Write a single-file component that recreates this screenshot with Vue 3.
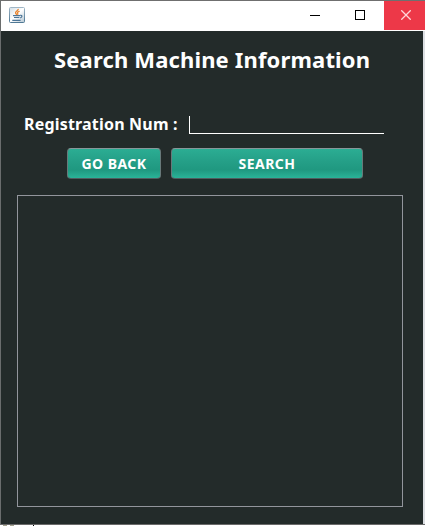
<script setup>
const title = 'Search Machine Information'
</script>

<template>
  <div class="screen">
    <div class="window">
      <header class="titlebar">
        <svg class="app-icon" width="16" height="16" viewBox="0 0 16 16">
          <defs>
            <linearGradient id="tile" x1="0" y1="0" x2="0" y2="1">
              <stop offset="0" stop-color="#9fb6c6" />
              <stop offset="1" stop-color="#4f7894" />
            </linearGradient>
            <linearGradient id="face" x1="0" y1="0" x2="1" y2="1">
              <stop offset="0" stop-color="#d3dee5" />
              <stop offset=".5" stop-color="#ffffff" />
              <stop offset="1" stop-color="#b3c5d1" />
            </linearGradient>
          </defs>
          <rect x=".5" y=".5" width="15" height="15" rx="1" fill="url(#face)" stroke="url(#tile)" />
          <path d="M9.2 1.8C9.6 3.8 5.8 4.2 6.6 6 6.9 6.8 7.7 7 7.5 8M10.6 4.3C8.6 4.8 8.1 5.5 8.7 6.3 9.1 6.9 8.8 7.4 8.4 7.8" fill="none" stroke="#e8822c" stroke-width="1.3" />
          <path d="M4 8.6H11M5 10.5H10.4M3.3 13.4H11.6M11.2 8.4C13.6 7.8 13.4 10.2 11.2 10.8" fill="none" stroke="#4b7597" stroke-width="1.2" />
        </svg>
        <div class="controls">
          <span class="control">
            <svg width="10" height="10" viewBox="0 0 10 10"><path d="M0 5.5H10" stroke="#000" /></svg>
          </span>
          <span class="control">
            <svg width="10" height="10" viewBox="0 0 10 10"><rect x=".5" y=".5" width="9" height="9" fill="none" stroke="#000" /></svg>
          </span>
          <span class="control close">
            <svg width="10" height="10" viewBox="0 0 10 10"><path d="M.3 .3L9.7 9.7M9.7 .3L.3 9.7" stroke="#ffd5d9" stroke-width="1.3" /></svg>
          </span>
        </div>
      </header>
      <main class="content">
        <h1>{{ title }}</h1>
        <div class="field">
          <label for="registration">Registration Num :</label>
          <input id="registration" type="text" />
        </div>
        <div class="actions">
          <button class="back"><span>GO BACK</span></button>
          <button class="search"><span>SEARCH</span></button>
        </div>
        <section class="results"></section>
      </main>
    </div>
    <div class="below"><i class="smudge"></i><i class="smudge"></i><i class="tick"></i></div>
  </div>
</template>

<style>
body {
  margin: 0;
  overflow: hidden;
}
</style>

<style scoped>
.screen {
  width: 425px;
  height: 526px;
  box-sizing: border-box;
  overflow: hidden;
  background: #dcdfe3;
  font-family: "Noto Sans", "DejaVu Sans", sans-serif;
  font-weight: 700;
  color: #fff;
}
.window {
  box-sizing: border-box;
  height: 525px;
  border-top: 1px solid #6f6f6f;
  border-left: 1px solid #6a6d6d;
  border-bottom: 1px solid #6a6a6a;
}
.titlebar {
  display: flex;
  justify-content: space-between;
  height: 30px;
  background: #fff;
}
.app-icon {
  margin: 6px 0 0 8px;
}
.controls {
  display: flex;
  height: 29px;
}
.control {
  display: flex;
  align-items: flex-start;
  justify-content: center;
  box-sizing: border-box;
  width: 45px;
  padding: 9px 4px 0 0;
}
.control.close {
  width: 41px;
  padding: 9px 0 0 3px;
  background: #ed3848;
}
.content {
  display: flex;
  flex-direction: column;
  box-sizing: border-box;
  width: 422px;
  height: 493px;
  background: #232b2a;
}
h1 {
  margin: 13px 0 0 53px;
  font-size: 22px;
  line-height: 30px;
  font-weight: 700;
  letter-spacing: 0.15px;
  white-space: nowrap;
}
.field {
  display: flex;
  align-items: flex-start;
  height: 19px;
  margin: 41px 0 0 23px;
}
label {
  width: 165px;
  font-size: 16px;
  line-height: 20px;
  letter-spacing: 0.19px;
  margin-top: -1px;
  white-space: nowrap;
}
input {
  box-sizing: border-box;
  width: 195px;
  height: 18px;
  margin: 1px 0 0;
  padding: 0;
  border: solid #fff;
  border-width: 0 0 1px 1px;
  border-radius: 0;
  background: transparent;
  outline: none;
}
.actions {
  display: flex;
  gap: 10px;
  margin: 14px 0 0 66px;
}
button {
  box-sizing: border-box;
  height: 31px;
  padding: 0;
  border: 1px solid #68797a;
  border-top-color: #87979a;
  border-bottom-color: #4f5c5e;
  border-radius: 4px;
  background: linear-gradient(#2bad93 0%, #25a088 40%, #209880 72%, #2ab398 100%);
  color: #fff;
  font: 700 14px/20px "Noto Sans", "DejaVu Sans", sans-serif;
  letter-spacing: 0.45px;
  white-space: nowrap;
}
.back {
  width: 94px;
}
.search {
  width: 192px;
}
.results {
  box-sizing: border-box;
  width: 386px;
  height: 312px;
  margin: 16px 0 0 16px;
  border: 1px solid #92959c;
}
.below {
  display: flex;
  height: 1px;
  background: #fff;
}
.smudge {
  width: 4px;
  margin-left: 3px;
  background: #a5a38f;
}
.tick {
  width: 1px;
  margin-left: 19px;
  background: #000;
}
</style>
